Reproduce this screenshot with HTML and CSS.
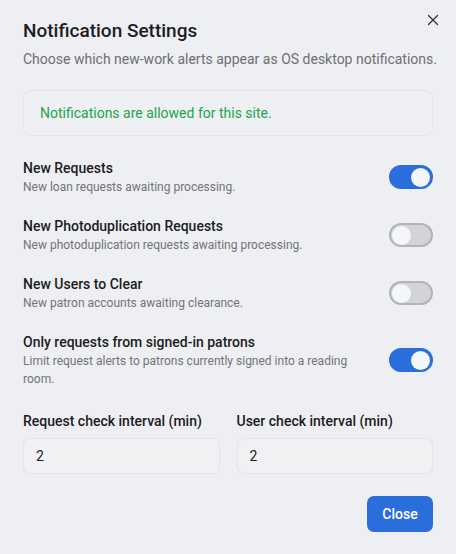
FILE: index.html
```html
<!DOCTYPE html>
<html>
<head>
<meta charset="utf-8">
<link rel="stylesheet" href="styles.css">
</head>
<body>
<div class="dialog">
  <button class="close-x" aria-label="Close">
    <svg width="12" height="12" viewBox="0 0 12 12"><path d="M1.5 1.5 L10.5 10.5 M10.5 1.5 L1.5 10.5" stroke="#333" stroke-width="1.3" stroke-linecap="round"/></svg>
  </button>
  <h1 class="title">Notification Settings</h1>
  <p class="subtitle">Choose which new-work alerts appear as OS desktop notifications.</p>
  <div class="status">Notifications are allowed for this site.</div>
  <div class="rows">
    <div class="row">
      <div class="row-text">
        <div class="row-title">New Requests</div>
        <div class="row-desc">New loan requests awaiting processing.</div>
      </div>
      <span class="toggle on"><span class="knob"></span></span>
    </div>
    <div class="row">
      <div class="row-text">
        <div class="row-title">New Photoduplication Requests</div>
        <div class="row-desc">New photoduplication requests awaiting processing.</div>
      </div>
      <span class="toggle"><span class="knob"></span></span>
    </div>
    <div class="row">
      <div class="row-text">
        <div class="row-title">New Users to Clear</div>
        <div class="row-desc">New patron accounts awaiting clearance.</div>
      </div>
      <span class="toggle"><span class="knob"></span></span>
    </div>
    <div class="row">
      <div class="row-text">
        <div class="row-title">Only requests from signed-in patrons</div>
        <div class="row-desc">Limit request alerts to patrons currently signed into a reading room.</div>
      </div>
      <span class="toggle on"><span class="knob"></span></span>
    </div>
  </div>
  <div class="fields">
    <label class="field">
      <span class="field-label">Request check interval (min)</span>
      <span class="input">2</span>
    </label>
    <label class="field">
      <span class="field-label">User check interval (min)</span>
      <span class="input">2</span>
    </label>
  </div>
  <div class="actions">
    <button class="btn">Close</button>
  </div>
</div>
</body>
</html>
```

FILE: styles.css
```css
html, body {
  margin: 0;
  padding: 0;
  background: #eeeff3;
}
body {
  font-family: Roboto, "Liberation Sans", sans-serif;
  color: #1c1c1e;
}
.dialog {
  position: relative;
  width: 456px;
  height: 554px;
  box-sizing: border-box;
  padding: 18px 23px 0 23px;
}
.close-x {
  position: absolute;
  top: 14px;
  right: 17px;
  width: 12px;
  height: 12px;
  padding: 0;
  border: 0;
  background: none;
  display: flex;
}
.title {
  margin: 0;
  font-size: 19px;
  font-weight: 500;
  line-height: 26px;
  color: #1c1c1e;
}
.subtitle {
  margin: 5px 0 0 0;
  font-size: 14px;
  line-height: 20px;
  color: #6e6e73;
  white-space: nowrap;
}
.status {
  margin-top: 21px;
  height: 46px;
  box-sizing: border-box;
  border: 1px solid #e4e5ea;
  border-radius: 8px;
  padding: 0 16px;
  display: flex;
  align-items: center;
  font-size: 14px;
  color: #1aa64a;
  background: #eff0f4;
}
.rows {
  margin-top: 22px;
  display: flex;
  flex-direction: column;
  gap: 20px;
}
.row {
  display: flex;
  align-items: center;
  justify-content: space-between;
  gap: 24px;
}
.row-text {
  flex: 1;
  max-width: 330px;
}
.row-title {
  font-size: 14px;
  font-weight: 500;
  line-height: 20px;
}
.row-desc {
  font-size: 12px;
  line-height: 18px;
  color: #737378;
}
.toggle {
  flex: none;
  width: 44px;
  height: 24px;
  box-sizing: border-box;
  border-radius: 12px;
  background: #d4d4d8;
  border: 2px solid #b3b3b8;
  display: flex;
  align-items: center;
  padding: 0 1px;
}
.toggle .knob {
  width: 19px;
  height: 19px;
  border-radius: 50%;
  background: #f3f6fb;
}
.toggle.on {
  background: #2a6edb;
  border-color: #2a6edb;
  justify-content: flex-end;
}
.fields {
  margin-top: 23px;
  display: grid;
  grid-template-columns: 1fr 1fr;
  gap: 17px;
}
.field {
  display: flex;
  flex-direction: column;
  gap: 7px;
}
.field-label {
  font-size: 14px;
  font-weight: 500;
  line-height: 20px;
}
.input {
  height: 36px;
  box-sizing: border-box;
  border: 1px solid #e3e3e8;
  border-radius: 7px;
  background: #f1f1f4;
  padding: 0 12px;
  display: flex;
  align-items: center;
  font-size: 14px;
  color: #1c1c1e;
}
.actions {
  margin-top: 22px;
  display: flex;
  justify-content: flex-end;
}
.btn {
  width: 66px;
  height: 36px;
  border: 0;
  border-radius: 7px;
  background: #2a6edb;
  color: #ffffff;
  font-family: inherit;
  font-size: 14px;
  font-weight: 500;
}
```
